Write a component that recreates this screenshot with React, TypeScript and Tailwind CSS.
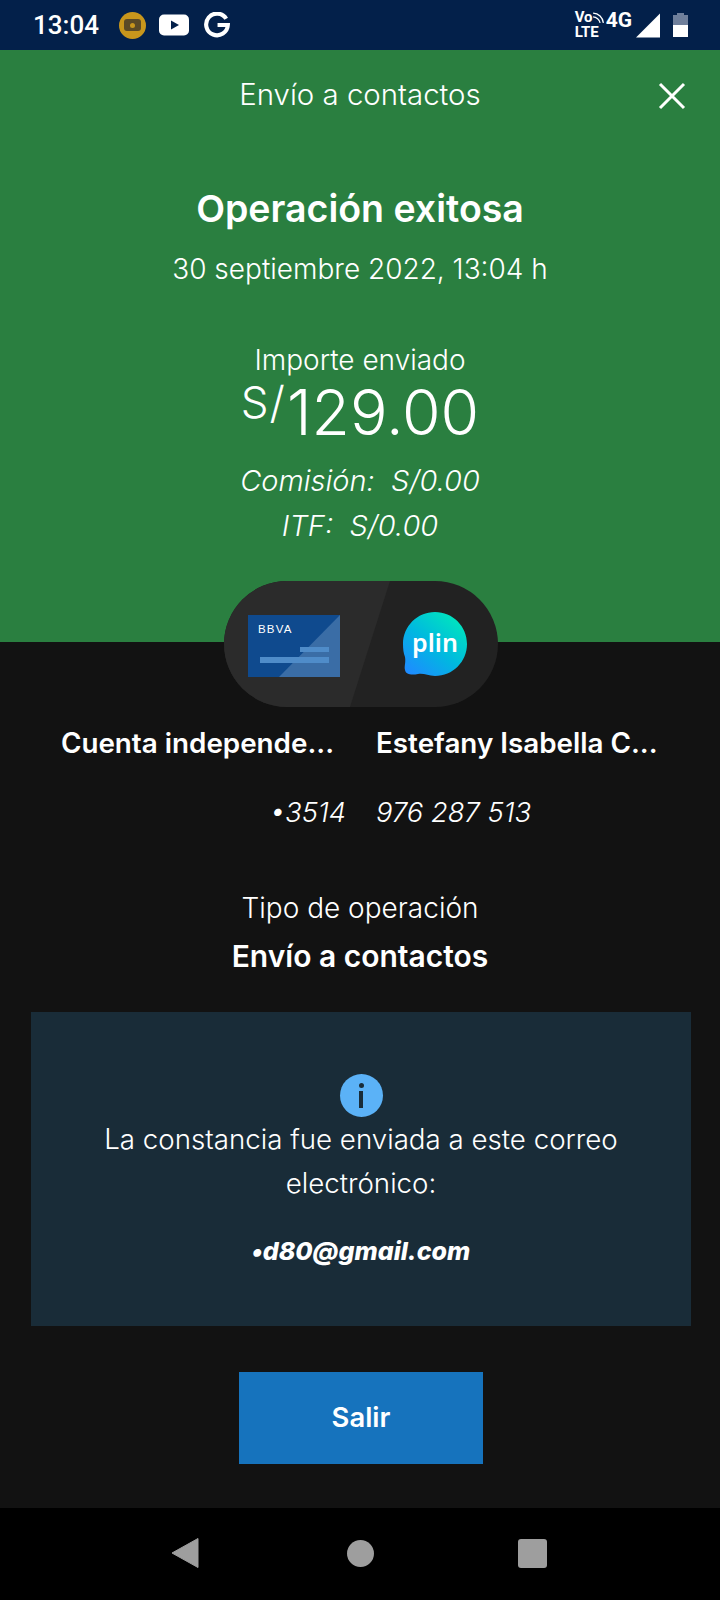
const sans = "font-['Inter','Liberation_Sans',sans-serif]";

function BbvaCard() {
	return (
		<svg width="92" height="62" viewBox="0 0 92 62" className="shrink-0">
			<rect width="92" height="62" fill="#0f4a8e" />
			<path d="M92 0V62H31Z" fill="#3a6da6" />
			<rect x="52" y="32" width="29" height="5" fill="#4f8cc9" />
			<rect x="12" y="42" width="69" height="6" fill="#4f8cc9" />
			<text x="10" y="18" fill="#ffffff" fontSize="11.500" fontFamily="Liberation Sans, sans-serif" letterSpacing="1.200">
				BBVA
			</text>
		</svg>
	);
}

function PlinLogo() {
	return (
		<svg width="66" height="66" viewBox="0 0 66 66" className="shrink-0">
			<defs>
				<linearGradient id="plinGrad" x1="0.1" y1="0.95" x2="0.8" y2="0.1">
					<stop offset="0" stopColor="#1e8cff" />
					<stop offset="0.5" stopColor="#00b8e0" />
					<stop offset="1" stopColor="#00e2c0" />
				</linearGradient>
			</defs>
			<path
				d="M33 1C50.700 1 65 15.300 65 33C65 50.700 50.700 65 33 65C26 65 22 62 16 63C10 64 4 64 3 59C2 55 4 52 3 46C1.500 42 1 38 1 33C1 15.300 15.300 1 33 1Z"
				fill="url(#plinGrad)"
			/>
			<text x="33" y="41" textAnchor="middle" fill="#ffffff" fontSize="25" fontWeight="600" fontFamily="Noto Sans, sans-serif">
				plin
			</text>
		</svg>
	);
}

function StatusBar() {
	return (
		<div className="h-[50px] bg-[#03204a] flex items-center text-white pl-[33px] pr-[32px] shrink-0">
			<span className="text-[26px] font-medium font-['Roboto',sans-serif] leading-none">13:04</span>
			<div className="ml-[20px] w-[27px] h-[27px] rounded-full bg-[#c8961c] flex items-center justify-center">
				<div className="w-[17px] h-[12px] rounded-[3px] bg-[#5b4a26] flex items-center justify-center">
					<div className="w-[5px] h-[5px] bg-[#c8961c] rounded-full" />
				</div>
			</div>
			<svg width="30" height="22" viewBox="0 0 30 22" className="ml-[13px]">
				<rect width="30" height="21" y="0.500" rx="5" fill="#ffffff" />
				<path d="M12 6.500L20 11L12 15.500Z" fill="#03204a" />
			</svg>
			<svg width="26" height="26" viewBox="0 0 24 24" className="ml-[15px]" fill="none">
				<path d="M20.500 6.200A10 10 0 1 0 22 12H12.500" stroke="#ffffff" strokeWidth="3.800" />
			</svg>
			<div className="ml-auto flex items-center">
				<div className="text-[15px] leading-[15px] font-bold font-['Roboto',sans-serif] relative w-[33px]">
					<div>Vo</div>
					<div>LTE</div>
					<svg width="13" height="13" viewBox="0 0 12 12" className="absolute left-[17px] top-[1px]" fill="none" stroke="#ffffff" strokeWidth="1.200">
						<path d="M1 2C6 2 10 6 10.500 11" />
						<path d="M1 5.500C4 5.500 7 8 7.500 11" />
					</svg>
				</div>
				<span className="text-[21px] leading-none font-bold font-['Roboto',sans-serif] -mt-[9px] -ml-[2px]">4G</span>
				<svg width="25" height="25" viewBox="0 0 25 25" className="ml-[4px]">
					<path d="M24 0.500V24.500H0Z" fill="#ffffff" />
				</svg>
				<div className="ml-[12px] w-[15px] h-[24px] flex flex-col items-center">
					<div className="w-[7px] h-[2px] bg-[#6f7f9b]" />
					<div className="w-full h-[10px] bg-[#6f7f9b]" />
					<div className="w-full h-[12px] bg-white" />
				</div>
			</div>
		</div>
	);
}

function NavBar() {
	return (
		<div className="h-[92px] bg-black flex items-center pl-[171px] shrink-0 pb-[2px]">
			<svg width="28" height="32" viewBox="0 0 28 32">
				<path d="M27 1.500V30.500L1 16Z" fill="#9e9e9e" stroke="#9e9e9e" strokeLinejoin="round" />
			</svg>
			<div className="ml-[148px] w-[27px] h-[27px] rounded-full bg-[#9e9e9e]" />
			<div className="ml-[144px] w-[29px] h-[29px] rounded-[3px] bg-[#9e9e9e]" />
		</div>
	);
}

export default function App() {
	return (
		<div className={`${sans} w-[720px] h-[1600px] flex flex-col bg-[#121212] text-white overflow-hidden`}>
			<StatusBar />

			<div className="h-[592px] bg-[#2a7f40] flex flex-col items-center shrink-0 relative">
				<h1 className="mt-[26px] text-[29.4px] leading-[38px] font-light">Envío a contactos</h1>
				<svg width="28" height="28" viewBox="0 0 28 28" className="absolute right-[34px] top-[32px]" stroke="#ffffff" strokeWidth="3" fill="none">
					<path d="M2 2L26 26M26 2L2 26" />
				</svg>
				<h2 className="mt-[72px] text-[37.5px] leading-[46px] font-semibold">Operación exitosa</h2>
				<p className="mt-[18px] text-[28px] leading-[38px] font-light">30 septiembre 2022, 13:04 h</p>
				<p className="mt-[53px] text-[28px] leading-[38px] font-light">Importe enviado</p>
				<div className="flex items-start font-light -mt-[1px]">
					<span className="text-[44px] leading-[44px] mt-[2px] tracking-[1px]">S/</span>
					<span className="text-[62.5px] leading-[68px] ml-[1px]">129.00</span>
				</div>
				<p className="mt-[16px] text-[29px] leading-[38px] font-light italic whitespace-pre">Comisión:  S/0.00</p>
				<p className="mt-[7px] text-[29px] leading-[38px] font-light italic whitespace-pre">ITF:  S/0.00</p>
			</div>

			<div className="-mt-[61px] ml-[224px] w-[274px] h-[126px] rounded-[63px] bg-[#222222] overflow-hidden relative z-10 flex items-center shrink-0">
				<div className="absolute inset-0 bg-[#2b2b2b] [clip-path:polygon(0_0,166px_0,126px_100%,0_100%)]" />
				<div className="relative ml-[24px] mt-[3px]">
					<BbvaCard />
				</div>
				<div className="relative ml-[62px]">
					<PlinLogo />
				</div>
			</div>

			<div className="flex mt-[16px] text-[27.8px] leading-[40px] font-semibold">
				<div className="w-[346px] text-right pr-[12px]">Cuenta independe...</div>
				<div className="pl-[30px] whitespace-nowrap">Estefany Isabella C...</div>
			</div>
			<div className="flex mt-[29px] text-[27.4px] leading-[40px] font-light italic">
				<div className="w-[346px] text-right">•3514</div>
				<div className="pl-[30px]">976 287 513</div>
			</div>

			<p className="mt-[56px] text-center text-[28px] leading-[40px] font-light">Tipo de operación</p>
			<p className="mt-[8px] text-center text-[30px] leading-[40px] font-semibold">Envío a contactos</p>

			<div className="mt-[36px] ml-[31px] w-[660px] h-[314px] bg-[#192c38] flex flex-col items-center pt-[62px]">
				<div className="w-[43px] h-[43px] rounded-full bg-[#5bb2f7] flex flex-col items-center justify-center">
					<div className="w-[5px] h-[5px] rounded-full bg-[#192c38]" />
					<div className="w-[4px] h-[17px] mt-[3px] bg-[#192c38]" />
				</div>
				<p className="mt-[0px] text-center text-[27.7px] leading-[44px] font-light w-[560px]">
					La constancia fue enviada a este correo electrónico:
				</p>
				<p className="mt-[26px] text-[25px] leading-[40px] font-extrabold italic">•d80@gmail.com</p>
			</div>

			<button type="button" className="mt-[46px] ml-[239px] w-[244px] h-[92px] bg-[#1673bd] text-[27.4px] font-semibold shrink-0">
				Salir
			</button>

			<div className="flex-1" />
			<NavBar />
		</div>
	);
}
